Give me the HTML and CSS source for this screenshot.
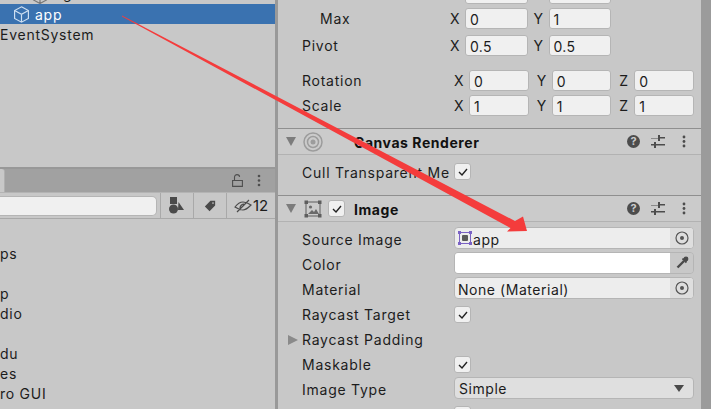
FILE: index.html
```html
<!DOCTYPE html>
<html lang="en">
<head>
  <meta charset="UTF-8">
  <meta name="viewport" content="width=device-width, initial-scale=1.0">
  <title>Inspector</title>
  <link rel="stylesheet" href="styles.css">
</head>
<body>
  <div class="editor">
    <div class="left-panel">
      <div class="hierarchy">
        <div class="clipped-row">
          <svg class="cube" width="16" height="16" viewBox="0 0 16 16" fill="none" stroke="#777" stroke-width="1.2"><path d="M8 1l6.5 3.500v7.500L8 15.500 1.500 12V4.500zM1.500 4.500L8 8l6.500-3.500M8 8v7.500"/></svg>
          <span>g</span>
        </div>
        <div class="tree-row selected">
          <svg class="cube" width="17" height="17" viewBox="0 0 16 16" fill="none" stroke="#cfe0f2" stroke-width="1.100"><path d="M8 .8l6.500 3.500v7.400L8 15.200l-6.500-3.500V4.300zM1.500 4.300L8 7.800l6.500-3.500M8 7.800v7.400"/></svg>
          <span>app</span>
        </div>
        <div class="tree-row">EventSystem</div>
      </div>

      <div class="tab-bar">
        <div class="tab-stub"></div>
        <svg class="lock" width="11" height="13" viewBox="0 0 11 13" fill="none" stroke="#4e4e4e" stroke-width="1.100"><path d="M.6 6.500h9.800v5.900H.6zM2.500 6.500V3.200C2.500 1.600 3.600.6 5 .6s2.500.9 2.600 2.300"/></svg>
        <svg class="kebab" width="4" height="13" viewBox="0 0 4 13" fill="#4e4e4e"><circle cx="2" cy="2" r="1.300"/><circle cx="2" cy="6.500" r="1.300"/><circle cx="2" cy="11" r="1.300"/></svg>
      </div>

      <div class="toolbar">
        <div class="search"></div>
        <div class="tool-btn">
          <svg width="16" height="17" viewBox="0 0 16 17" fill="#4a4a4a"><rect x="1" y="0" width="7" height="7"/><circle cx="4.500" cy="12" r="4.500"/><path d="M9.500 5l5.500 8H9z"/></svg>
        </div>
        <div class="tool-btn">
          <svg width="12" height="12" viewBox="0 0 14 14" fill="#4a4a4a"><path d="M7.500 1H13v5.500L6.500 13 1 7.500zM10.500 2.500a1 1 0 100 2 1 1 0 000-2z" fill-rule="evenodd"/></svg>
        </div>
        <div class="tool-btn hidden-count">
          <svg width="18" height="14" viewBox="0 0 18 14" fill="none" stroke="#4a4a4a" stroke-width="1.200"><path d="M1 8c3-4 5-5 8-5s5 1 8 3c-3 3-5 5-8 5S4 10 1 8zM3 13L15 1M6 9c0-2 2-4 4-4"/></svg>
          <span>12</span>
        </div>
      </div>

      <ul class="project-list">
        <li></li>
        <li>ps</li>
        <li></li>
        <li>p</li>
        <li>dio</li>
        <li></li>
        <li>du</li>
        <li>es</li>
        <li>ro GUI</li>
      </ul>
    </div>

    <div class="inspector">
      <div class="section transform">
        <div class="row clipped">
          <div class="vec two"><div class="axis"><b></b><i class="field"></i></div><div class="axis"><b></b><i class="field"></i></div></div>
        </div>
        <div class="row max">
          <label class="indent">Max</label>
          <div class="vec two">
            <div class="axis"><b>X</b><i class="field">0</i></div>
            <div class="axis"><b>Y</b><i class="field">1</i></div>
          </div>
        </div>
        <div class="row pivot">
          <label>Pivot</label>
          <div class="vec two">
            <div class="axis"><b>X</b><i class="field">0.5</i></div>
            <div class="axis"><b>Y</b><i class="field">0.5</i></div>
          </div>
        </div>
        <div class="row rotation">
          <label>Rotation</label>
          <div class="vec three">
            <div class="axis"><b>X</b><i class="field">0</i></div>
            <div class="axis"><b>Y</b><i class="field">0</i></div>
            <div class="axis"><b>Z</b><i class="field">0</i></div>
          </div>
        </div>
        <div class="row scale">
          <label>Scale</label>
          <div class="vec three">
            <div class="axis"><b>X</b><i class="field">1</i></div>
            <div class="axis"><b>Y</b><i class="field">1</i></div>
            <div class="axis"><b>Z</b><i class="field">1</i></div>
          </div>
        </div>
      </div>

      <div class="comp-header">
        <span class="fold"></span>
        <svg class="comp-icon" width="20" height="20" viewBox="0 0 20 20" fill="none" stroke="#9c9c9c"><circle cx="10" cy="10" r="9" stroke-width="1.500"/><circle cx="10" cy="10" r="5.500" stroke-width="1.500"/><circle cx="10" cy="10" r="2.500" fill="#9c9c9c" stroke="none"/></svg>
        <h3 class="no-check">Canvas Renderer</h3>
        <div class="comp-tools">
          <svg width="13" height="13" viewBox="0 0 13 13"><circle cx="6.500" cy="6.500" r="6.500" fill="#4c4c4c"/><text x="6.500" y="10.300" text-anchor="middle" class="help-mark">?</text></svg>
          <svg width="14" height="13" viewBox="0 0 14 13" fill="#4c4c4c"><path d="M0 3h7V1.500h0V0h2v2h5v1.500H9V6H7V3.500H0zM0 9h3V7h2v2h9v1.500H5V13H3v-2.500H0z"/></svg>
          <svg width="4" height="13" viewBox="0 0 4 13" fill="#4c4c4c"><circle cx="2" cy="2" r="1.400"/><circle cx="2" cy="6.500" r="1.400"/><circle cx="2" cy="11" r="1.400"/></svg>
        </div>
      </div>
      <div class="section cull">
        <div class="row check-row">
          <label class="cut">Cull Transparent Mesh</label>
          <span class="check"><svg width="10" height="8" viewBox="0 0 10 8" fill="none" stroke="#222" stroke-width="1.400"><path d="M1 4l3 3 5-6"/></svg></span>
        </div>
      </div>

      <div class="comp-header">
        <span class="fold"></span>
        <svg class="comp-icon image-icon" width="18" height="18" viewBox="0 0 18 18"><rect x="2" y="2" width="14" height="14" fill="none" stroke="#5e5e5e"/><rect x=".5" y=".5" width="3.500" height="3.500" fill="#5e5e5e"/><rect x="14" y=".5" width="3.500" height="3.500" fill="#5e5e5e"/><rect x=".5" y="14" width="3.500" height="3.500" fill="#5e5e5e"/><rect x="14" y="14" width="3.500" height="3.500" fill="#5e5e5e"/><circle cx="6.500" cy="7" r="1.600" fill="#6a6a6a"/><path d="M4 14l4-4 2 2 2-3 3 5z" fill="#6a6a6a"/></svg>
        <span class="check head-check"><svg width="10" height="8" viewBox="0 0 10 8" fill="none" stroke="#222" stroke-width="1.400"><path d="M1 4l3 3 5-6"/></svg></span>
        <h3>Image</h3>
        <div class="comp-tools">
          <svg width="13" height="13" viewBox="0 0 13 13"><circle cx="6.500" cy="6.500" r="6.500" fill="#4c4c4c"/><text x="6.500" y="10.300" text-anchor="middle" class="help-mark">?</text></svg>
          <svg width="14" height="13" viewBox="0 0 14 13" fill="#4c4c4c"><path d="M0 3h7V1.500h0V0h2v2h5v1.500H9V6H7V3.500H0zM0 9h3V7h2v2h9v1.500H5V13H3v-2.500H0z"/></svg>
          <svg width="4" height="13" viewBox="0 0 4 13" fill="#4c4c4c"><circle cx="2" cy="2" r="1.400"/><circle cx="2" cy="6.500" r="1.400"/><circle cx="2" cy="11" r="1.400"/></svg>
        </div>
      </div>
      <div class="section image">
        <div class="row prop">
          <label>Source Image</label>
          <div class="object-field">
            <svg class="sprite" width="14" height="14" viewBox="0 0 14 14"><rect x="1.500" y="1.500" width="11" height="11" fill="none" stroke="#7a62c4"/><rect x="0" y="0" width="3" height="3" fill="#7a62c4"/><rect x="11" y="0" width="3" height="3" fill="#7a62c4"/><rect x="0" y="11" width="3" height="3" fill="#7a62c4"/><rect x="11" y="11" width="3" height="3" fill="#7a62c4"/><rect x="4" y="4" width="6" height="6" rx="1" fill="#5a5a5a"/></svg>
            <span>app</span>
            <div class="picker"><svg width="14" height="14" viewBox="0 0 14 14"><circle cx="7" cy="7" r="6" fill="none" stroke="#555" stroke-width="1.200"/><circle cx="7" cy="7" r="2" fill="#555"/></svg></div>
          </div>
        </div>
        <div class="row prop">
          <label>Color</label>
          <div class="color-field">
            <div class="swatch"></div>
            <div class="picker"><svg width="14" height="14" viewBox="0 0 14 14" fill="none" stroke="#4a4a4a"><path d="M9 5L2.500 11.500" stroke-width="2.400"/><path d="M7.500 2.500l4 4" stroke-width="1.800"/><circle cx="11" cy="3" r="2.400" fill="#4a4a4a" stroke="none"/></svg></div>
          </div>
        </div>
        <div class="row prop">
          <label>Material</label>
          <div class="object-field">
            <span>None (Material)</span>
            <div class="picker"><svg width="14" height="14" viewBox="0 0 14 14"><circle cx="7" cy="7" r="6" fill="none" stroke="#555" stroke-width="1.200"/><circle cx="7" cy="7" r="2" fill="#555"/></svg></div>
          </div>
        </div>
        <div class="row line">
          <label>Raycast Target</label>
          <span class="check"><svg width="10" height="8" viewBox="0 0 10 8" fill="none" stroke="#222" stroke-width="1.400"><path d="M1 4l3 3 5-6"/></svg></span>
        </div>
        <div class="row line">
          <span class="fold-right"></span>
          <label>Raycast Padding</label>
        </div>
        <div class="row line">
          <label>Maskable</label>
          <span class="check"><svg width="10" height="8" viewBox="0 0 10 8" fill="none" stroke="#222" stroke-width="1.400"><path d="M1 4l3 3 5-6"/></svg></span>
        </div>
        <div class="row prop">
          <label>Image Type</label>
          <div class="dropdown"><span>Simple</span><span class="caret"></span></div>
        </div>
        <div class="row line last">
          <span class="check"></span>
        </div>
      </div>
    </div>

    <div class="scrollbar"></div>

    <svg class="arrow" width="711" height="409" viewBox="0 0 711 409">
      <polygon points="122,15.500 515,221 523,216.500 527,231 507,231.500 510.500,228 122,16.500" fill="#f43c3c"/>
    </svg>
  </div>
</body>
</html>
```

FILE: styles.css
```css
* {
  box-sizing: border-box;
}

html, body {
  margin: 0;
  padding: 0;
}

body {
  font-family: Inter, "Noto Sans", sans-serif;
  font-size: 14px;
  letter-spacing: 0.75px;
  color: #1c1c1c;
  background: #c8c8c8;
}

.editor {
  position: relative;
  display: flex;
  width: 711px;
  height: 409px;
  overflow: hidden;
}

/* left side */
.left-panel {
  width: 278px;
  flex: none;
  border-right: 3px solid #999;
  display: flex;
  flex-direction: column;
}

.hierarchy {
  height: 167px;
  flex: none;
  border-bottom: 2px solid #989898;
  box-sizing: content-box;
}

.clipped-row {
  height: 4px;
  overflow: hidden;
  display: flex;
  align-items: flex-end;
  padding-left: 32px;
  gap: 15px;
}

.clipped-row span {
  line-height: 20px;
  flex: none;
  margin-bottom: 0;
}

.clipped-row .cube {
  flex: none;
}

.tree-row {
  height: 20px;
  display: flex;
  align-items: center;
}

.tree-row.selected {
  background: #3a72b0;
  color: #fff;
  padding-left: 13px;
  gap: 5px;
}

.tab-bar {
  height: 24px;
  background: #a1a1a1;
  border-bottom: 1px solid #b4b4b4;
  display: flex;
  align-items: center;
  padding-right: 14px;
}

.tab-stub {
  width: 5px;
  height: 100%;
  background: #c8c8c8;
  border-right: 1px solid #b0b0b0;
  border-top-right-radius: 3px;
}

.lock {
  margin-left: auto;
  margin-right: 14px;
}

.toolbar {
  height: 26px;
  border-bottom: 1px solid #a9a9a9;
  display: flex;
  align-items: center;
}

.search {
  width: 157px;
  height: 20px;
  margin-right: 3px;
  background: #f0f0f0;
  border: 1px solid #b5b5b5;
  border-left: none;
  border-radius: 0 5px 5px 0;
}

.tool-btn {
  width: 33px;
  height: 100%;
  border-left: 1px solid #a9a9a9;
  display: flex;
  align-items: center;
  justify-content: center;
}

.hidden-count {
  flex: 1;
  justify-content: flex-start;
  padding-left: 7px;
  gap: 1px;
}

.hidden-count span {
  font-size: 15px;
  letter-spacing: 0;
}

.project-list {
  list-style: none;
  margin: 0;
  padding: 5px 0 0 0;
}

.project-list li {
  height: 20px;
  line-height: 20px;
}

/* inspector */
.inspector {
  flex: 1;
  min-width: 0;
}

.section {
  padding-left: 24px;
  padding-right: 6px;
}

.transform {
  height: 128px;
}

.cull {
  height: 40px;
}

.row {
  display: flex;
  align-items: center;
}

.row label {
  width: 148px;
  flex: none;
  white-space: nowrap;
  overflow: hidden;
  margin-top: -1px;
}

.row label.indent {
  padding-left: 18px;
}

.row.clipped {
  height: 4px;
  align-items: flex-end;
  overflow: hidden;
  padding-left: 148px;
}

.row.max {
  height: 21px;
  margin-top: 4px;
}

.row.pivot {
  height: 21px;
  margin-top: 6px;
}

.row.rotation {
  height: 21px;
  margin-top: 14px;
}

.row.scale {
  height: 21px;
  margin-top: 4px;
}

.vec {
  display: grid;
  flex: none;
}

.vec.two {
  width: 161px;
  grid-template-columns: 1fr 1fr;
  column-gap: 6px;
}

.vec.three {
  width: 240px;
  margin-left: 4px;
  grid-template-columns: 1fr 1fr 1fr;
  column-gap: 8px;
}

.axis {
  display: flex;
  align-items: center;
  letter-spacing: 0.35px;
}

.axis b {
  width: 15px;
  flex: none;
  font-weight: 400;
  margin-top: -1px;
}

.field {
  flex: 1;
  height: 21px;
  line-height: 22px;
  padding-left: 4px;
  font-style: normal;
  background: #f0f0f0;
  border: 1px solid #b5b5b5;
  border-radius: 3px;
}

.comp-header {
  height: 27px;
  border-top: 1px solid #8f8f8f;
  border-bottom: 1px solid #b2b2b2;
  background: #cbcbcb;
  display: flex;
  align-items: center;
  padding-left: 8px;
  padding-right: 15px;
}

.fold {
  width: 0;
  height: 0;
  border-left: 5px solid transparent;
  border-right: 5px solid transparent;
  border-top: 9px solid #7c7c7c;
}

.comp-icon {
  margin-left: 7px;
  flex: none;
}

.image-icon {
  margin-left: 8px;
}

.comp-header h3 {
  margin: 2px 0 0 9px;
  font-size: 14px;
  font-weight: 700;
  letter-spacing: 0.55px;
  color: #111;
}

.comp-header h3.no-check {
  margin-left: 31px;
}

.comp-tools {
  margin-left: auto;
  display: flex;
  align-items: center;
  gap: 11px;
}

.comp-tools svg:last-child {
  margin-left: 6px;
}

.help-mark {
  font-family: Inter, sans-serif;
  font-size: 11px;
  font-weight: 700;
  letter-spacing: 0;
  fill: #cbcbcb;
}

.check {
  width: 17px;
  height: 17px;
  flex: none;
  background: #f0f0f0;
  border: 1px solid #b5b5b5;
  border-radius: 3px;
  display: flex;
  align-items: center;
  justify-content: center;
}

.head-check {
  margin-left: 6px;
}

.check-row {
  height: 25px;
  padding-top: 8px;
}

.check-row label {
  width: 148px;
  margin-right: 4px;
  margin-top: 1px;
}

.image {
  padding-top: 5px;
}

.row.prop {
  height: 22px;
  margin-bottom: 3px;
}

.row.line {
  height: 25px;
}

.row.line.last {
  padding-left: 152px;
  align-items: flex-start;
  margin-top: 7px;
}

.row.line .fold-right {
  width: 0;
  height: 0;
  margin-left: -14px;
  margin-right: 4px;
  border-top: 5px solid transparent;
  border-bottom: 5px solid transparent;
  border-left: 10px solid #8a8a8a;
}

.row.prop label, .row.line label {
  width: 152px;
}

.row.prop label {
  margin-top: 3px;
}

.object-field, .color-field, .dropdown {
  width: 240px;
  height: 22px;
  flex: none;
  display: flex;
  align-items: center;
  letter-spacing: 0.55px;
  border: 1px solid #b5b5b5;
  border-radius: 4px;
  overflow: hidden;
}

.object-field {
  background: #ededed;
  padding-left: 3px;
  gap: 1px;
}

.object-field span {
  flex: 1;
  margin-top: 3px;
}

.sprite {
  flex: none;
}

.picker {
  width: 23px;
  height: 100%;
  flex: none;
  background: #dedede;
  display: flex;
  align-items: center;
  justify-content: center;
  margin-left: auto;
}

.swatch {
  flex: 1;
  height: 100%;
  background: #fff;
}

.color-field .picker {
  background: #c8c8c8;
}

.dropdown {
  background: #dfdfdf;
  padding: 0 9px 0 4px;
  justify-content: space-between;
}

.caret {
  width: 0;
  height: 0;
  border-left: 5px solid transparent;
  border-right: 5px solid transparent;
  border-top: 7px solid #4a4a4a;
}

.scrollbar {
  width: 10px;
  flex: none;
  background: #9b9b9b;
}

.arrow {
  position: absolute;
  left: 0;
  top: 0;
  pointer-events: none;
}
```
